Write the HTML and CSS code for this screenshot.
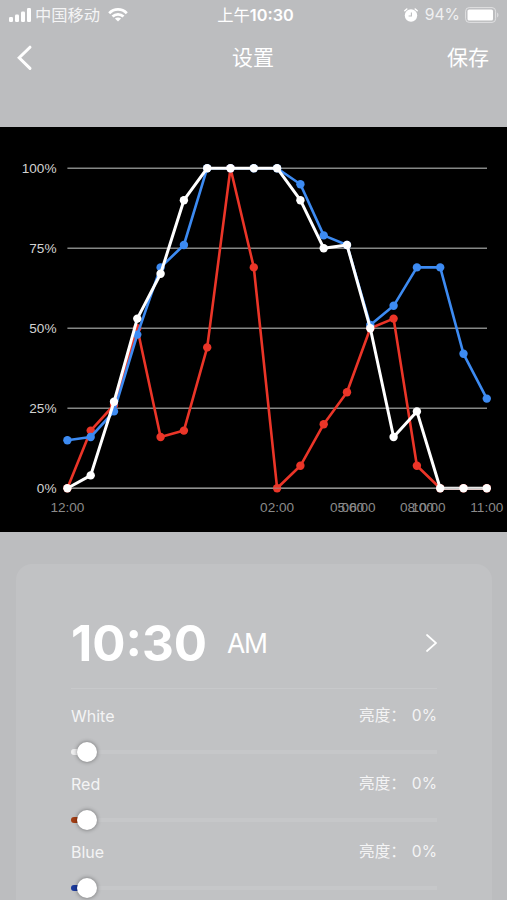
FILE: index.html
```html
<!DOCTYPE html>
<html lang="zh-CN">
<head>
    <meta charset="UTF-8">
    <meta name="viewport" content="width=device-width, initial-scale=1.0">
    <title>设置</title>
    <link rel="stylesheet" href="styles.css">
</head>
<body>
    <div class="status-bar">
        <div class="status-left">
            <svg class="signal" width="22" height="14" viewBox="0 0 22 14" fill="#fff">
                <rect x="0" y="9" width="4" height="5" rx="1.2"/>
                <rect x="6" y="6.5" width="4" height="7.5" rx="1.2"/>
                <rect x="12" y="3.5" width="4" height="10.5" rx="1.2"/>
                <rect x="18" y="0" width="4" height="14" rx="1.2"/>
            </svg>
            <span class="carrier">中国移动</span>
            <svg class="wifi" width="20" height="14" viewBox="0 0 20 14" fill="none" stroke="#fff" stroke-width="2.8">
                <path d="M1.2 5.2C6.2 0.2 13.8 0.2 18.8 5.2"/>
                <path d="M4.5 8.6C7.6 5.6 12.4 5.6 15.5 8.6"/>
                <path d="M10 13.6L6.9 10.6C8.6 9 11.4 9 13.1 10.6Z" fill="#fff" stroke="none"/>
            </svg>
        </div>
        <div class="status-time">上午<b>10:30</b></div>
        <div class="status-right">
            <svg class="alarm" width="14" height="14" viewBox="0 0 14 14">
                <circle cx="7" cy="7.5" r="6.2" fill="#fff"/>
                <path d="M0.8 2.8L2.8 1M13.2 2.8L11.2 1" stroke="#fff" stroke-width="1.5" stroke-linecap="round"/>
                <path d="M7.4 4.4V8H4.6" fill="none" stroke="#bcbdbf" stroke-width="1.1"/>
            </svg>
            <span class="percent">94%</span>
            <svg class="battery" width="34" height="16" viewBox="0 0 34 16">
                <rect x="0.6" y="0.6" width="30" height="14.8" rx="3.6" fill="none" stroke="#e0e0e2" stroke-width="1"/>
                <rect x="2.5" y="2.5" width="25.5" height="11" rx="1.6" fill="#fff"/>
                <path d="M32.2 5.5C33.8 6.3 33.8 9.7 32.2 10.5Z" fill="#e0e0e2"/>
            </svg>
        </div>
    </div>

    <div class="nav-bar">
        <svg class="back" width="16" height="26" viewBox="0 0 16 26">
            <path d="M13 2.2L2.2 12.8L13 23.4" fill="none" stroke="#fff" stroke-width="3" stroke-linecap="round"/>
        </svg>
        <div class="title">设置</div>
        <div class="save">保存</div>
    </div>

    <div class="chart">
        <svg id="chart" width="507" height="405" viewBox="0 127 507 405"></svg>
    </div>

    <div class="card">
        <div class="time-row">
            <span class="time">10:30</span>
            <span class="ampm">AM</span>
            <svg class="arrow" width="12" height="20" viewBox="0 0 12 20">
                <path d="M2 2L11 10L2 18" fill="none" stroke="#fff" stroke-width="1.7" stroke-linecap="round"/>
            </svg>
        </div>
        <div class="channel">
            <div class="channel-head"><span>White</span><span class="level">亮度：<span class="value">0%</span></span></div>
            <div class="slider white"><div class="fill"></div><div class="knob"></div></div>
        </div>
        <div class="channel">
            <div class="channel-head"><span>Red</span><span class="level">亮度：<span class="value">0%</span></span></div>
            <div class="slider red"><div class="fill"></div><div class="knob"></div></div>
        </div>
        <div class="channel">
            <div class="channel-head"><span>Blue</span><span class="level">亮度：<span class="value">0%</span></span></div>
            <div class="slider blue"><div class="fill"></div><div class="knob"></div></div>
        </div>
    </div>

    <script>
        var red = [0, 18, 26, 50, 16, 18, 44, 100, 69, 0, 7, 20, 30, 50, 53, 7, 0, 0, 0];
        var blue = [15, 16, 24, 48, 69, 76, 100, 100, 100, 100, 95, 79, 76, 51, 57, 69, 69, 42, 28];
        var white = [0, 4, 27, 53, 67, 90, 100, 100, 100, 100, 90, 75, 76, 50, 16, 24, 0, 0, 0];
        var times = [[0, '12:00'], [9, '02:00'], [12, '05:00'], [12.5, '06:00'], [15, '08:00'], [15.5, '10:00'], [18, '11:00']];

        function px(i) {
            return (67.4 + i * 23.3).toFixed(1);
        }

        function py(v) {
            return (488.2 - v * 3.2).toFixed(1);
        }

        function drawLine(values, name) {
            var points = values.map(function (v, i) { return px(i) + ',' + py(v); });
            return '<polyline class="line ' + name + '-line" points="' + points.join(' ') + '"/>';
        }

        function drawDots(values, name) {
            return values.map(function (v, i) {
                return '<circle class="' + name + '-dot" cx="' + px(i) + '" cy="' + py(v) + '" r="4.2"/>';
            }).join('');
        }

        var html = '';
        [100, 75, 50, 25, 0].forEach(function (v) {
            html += '<line class="grid" x1="67.4" x2="487" y1="' + py(v) + '" y2="' + py(v) + '"/>';
            html += '<text class="y-label" x="56.5" y="' + (Number(py(v)) + 4.4) + '">' + v + '%</text>';
        });
        times.forEach(function (t) {
            html += '<text class="x-label" x="' + px(t[0]) + '" y="512">' + t[1] + '</text>';
        });
        html += drawLine(red, 'red') + drawDots(red, 'red');
        html += drawLine(blue, 'blue') + drawDots(blue, 'blue');
        html += drawLine(white, 'white');
        // bottom axis goes over the lines
        html += '<line class="axis" x1="67.4" x2="487" y1="488.2" y2="488.2"/>';
        html += drawDots(white, 'white');
        document.getElementById('chart').innerHTML = html;
    </script>
</body>
</html>
```
FILE: styles.css
```css
body {
    font-family: Inter, "Noto Sans CJK SC", sans-serif;
    background-color: #bcbdbf;
    color: #fff;
    margin: 0;
    height: 900px;
    overflow: hidden;
}
svg {
    display: block;
    flex-shrink: 0;
}
.status-bar {
    display: grid;
    grid-template-columns: 1fr auto 1fr;
    align-items: center;
    height: 30px;
    padding: 0 8px 0 9px;
    font-size: 16px;
    line-height: 30px;
}
.status-left,
.status-right {
    display: flex;
    align-items: center;
}
.status-right {
    justify-content: flex-end;
}
.carrier {
    margin-left: 4px;
    font-size: 16.3px;
    color: #f4f4f5;
}
.wifi {
    margin-left: 8px;
}
.status-time {
    padding-left: 3px;
    font-size: 16.3px;
}
.status-time b {
    font-weight: 600;
}
.percent {
    margin: 0 5px 0 7px;
    font-size: 15.7px;
    color: #f0f0f1;
}
.nav-bar {
    display: grid;
    grid-template-columns: 1fr auto 1fr;
    align-items: center;
    height: 55px;
    padding: 0 18px 42px 17px;
    font-size: 21px;
    line-height: 30px;
}
.save {
    text-align: right;
}
.chart {
    height: 405px;
    background-color: #000;
}
.grid {
    stroke: #858786;
    stroke-width: 1.6;
}
.axis {
    stroke: #999;
    stroke-width: 1.6;
    opacity: 0.5;
}
.y-label,
.x-label {
    font-family: "Liberation Sans", Arial, sans-serif;
    font-size: 13.6px;
}
.y-label {
    fill: #d2d2d2;
    text-anchor: end;
}
.x-label {
    fill: #8a8a8a;
    text-anchor: middle;
}
.line {
    fill: none;
    stroke-width: 2.6;
    stroke-linejoin: round;
}
.red-line {
    stroke: #eb3528;
}
.blue-line {
    stroke: #3d8bf2;
}
.white-line {
    stroke: #fff;
    stroke-width: 3;
}
.red-dot {
    fill: #eb3528;
}
.blue-dot {
    fill: #3d8bf2;
}
.white-dot {
    fill: #fff;
}
.card {
    height: 360px;
    margin: 32px 15px 0 16px;
    padding: 34px 55px 0;
    border-radius: 16px;
    background-color: #c1c2c4;
    box-sizing: border-box;
}
.time-row {
    display: flex;
    align-items: center;
    height: 90px;
    border-bottom: 1px solid #c8c9cb;
}
.time {
    font-size: 49.3px;
    font-weight: 700;
}
.ampm {
    margin-left: 20px;
    font-size: 26.5px;
    letter-spacing: -1.2px;
}
.arrow {
    margin-left: auto;
}
.channel {
    height: 68px;
}
.channel-head {
    display: flex;
    justify-content: space-between;
    padding-top: 15px;
    font-size: 16px;
    line-height: 24px;
    color: #f4f4f5;
}
.level {
    display: flex;
    font-size: 15.6px;
}
.value {
    margin-left: 6px;
}
.slider {
    display: flex;
    align-items: center;
    height: 20px;
    margin-top: 14px;
    background: linear-gradient(#c6c7c9, #c6c7c9) center / 100% 4px no-repeat;
}
.fill {
    width: 12px;
    height: 6px;
    border-radius: 3px 0 0 3px;
}
.white .fill {
    background-color: #eeeeef;
}
.red .fill {
    background-color: #a13d14;
}
.blue .fill {
    background-color: #1c3a9c;
}
.knob {
    width: 20px;
    height: 20px;
    margin-left: -6px;
    border-radius: 50%;
    background-color: #fff;
    box-shadow: 0 0 4px rgba(0, 0, 0, 0.45);
}
```
